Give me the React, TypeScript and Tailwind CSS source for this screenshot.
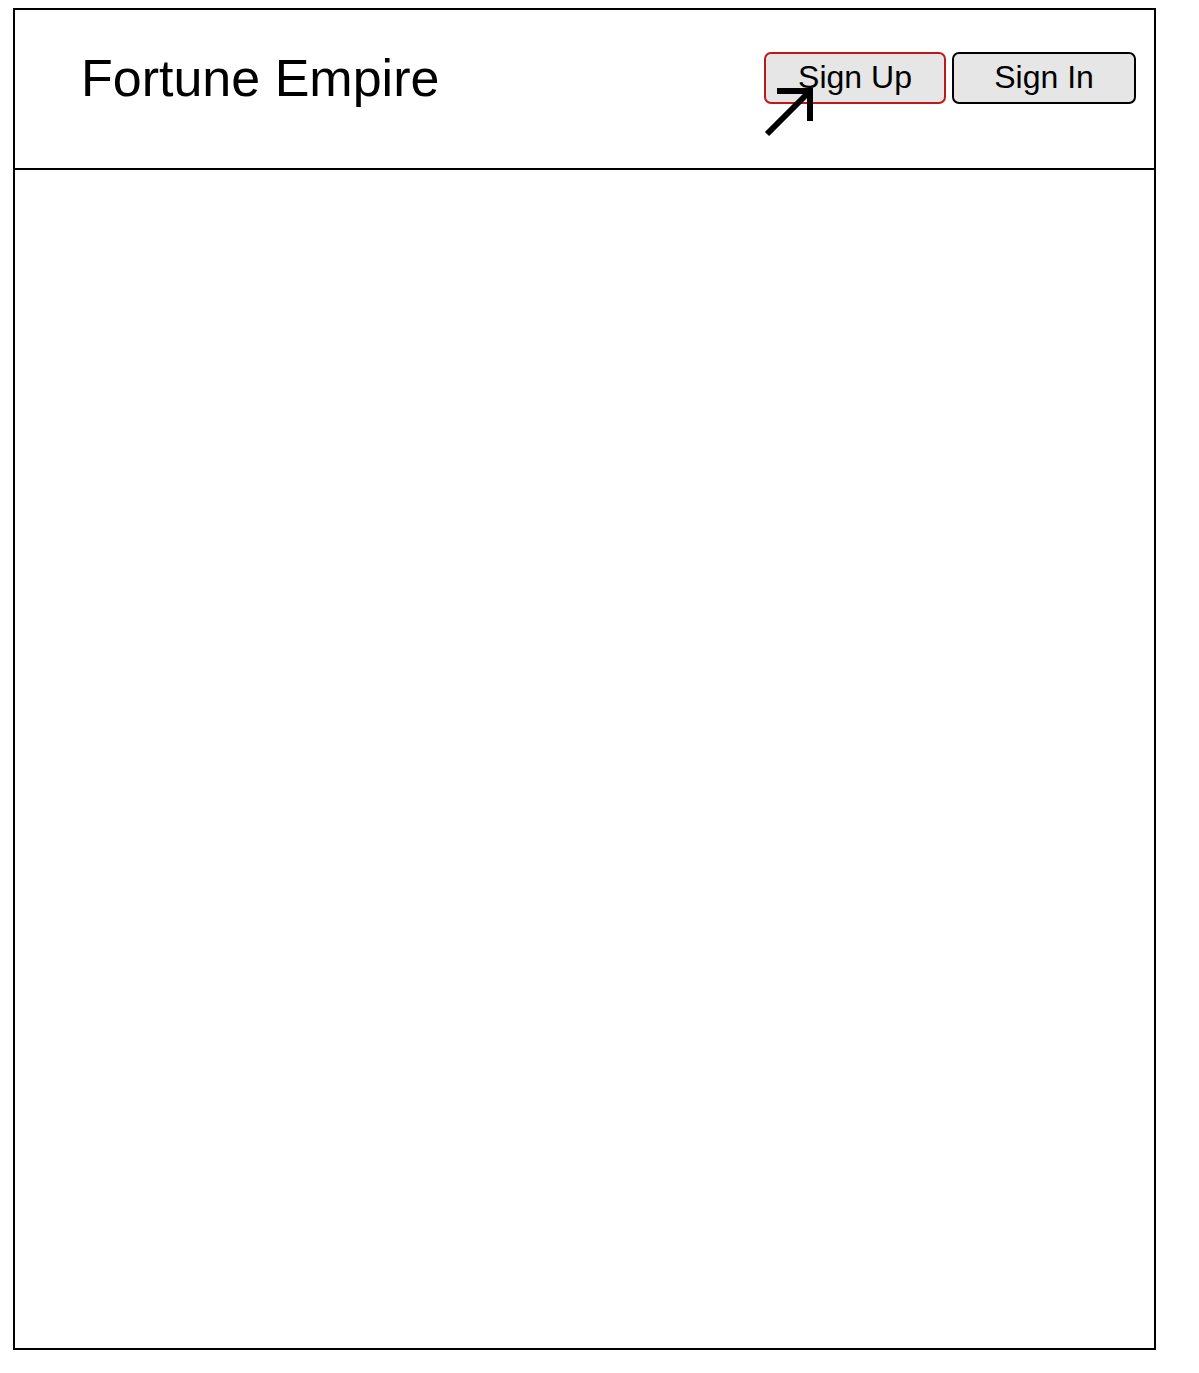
import React from 'react';

export default function App() {
  return (
    <main className="relative min-h-screen bg-white text-black" style={{ fontFamily: '"Liberation Sans", Arial, sans-serif' }}>
      <div className="ml-[13px] pt-[8px]">
        <div className="w-[1143px] h-[1342px] border-2 border-black flex flex-col">
          {/* Header */}
          <header className="h-[160px] border-b-2 border-black flex items-start justify-between pl-[66px] pr-[18px] pt-[42px]">
            <h1 className="text-[52px] leading-[52px] font-normal">Fortune Empire</h1>
            <div className="flex items-center gap-[6px]">
              <button className="w-[182px] h-[52px] pb-[3px] rounded-[7px] border-2 border-[#c01818] bg-[#e6e6e6] text-[32px] leading-none">
                Sign Up
              </button>
              <button className="w-[184px] h-[52px] pb-[3px] rounded-[7px] border-2 border-black bg-[#e6e6e6] text-[32px] leading-none">
                Sign In
              </button>
            </div>
          </header>
          <section className="flex-1" />
        </div>
      </div>

      {/* cursor annotation */}
      <svg className="absolute left-[760px] top-[84px]" width="60" height="60" viewBox="0 0 60 60">
        <path d="M7 50 L48 9" stroke="#000" strokeWidth="6" fill="none" />
        <path d="M20 7 L50 7 L50 34" stroke="#000" strokeWidth="6" fill="none" strokeLinecap="square" />
      </svg>
    </main>
  );
}
